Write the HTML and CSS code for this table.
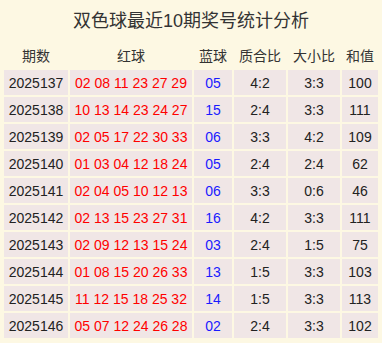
FILE: index.html
```html
<!DOCTYPE html>
<html lang="zh">
<head>
<meta charset="utf-8">
<link rel="stylesheet" href="styles.css">
</head>
<body>
<div class="wrap">
  <h1 class="title">双色球最近10期奖号统计分析</h1>
  <table class="grid">
    <colgroup>
      <col class="c1"><col class="c2"><col class="c3"><col class="c4"><col class="c5"><col class="c6">
    </colgroup>
    <thead>
      <tr><th>期数</th><th>红球</th><th>蓝球</th><th>质合比</th><th>大小比</th><th>和值</th></tr>
    </thead>
    <tbody>
      <tr><td>2025137</td><td class="red">02 08 11 23 27 29</td><td class="blue">05</td><td>4:2</td><td>3:3</td><td>100</td></tr>
      <tr><td>2025138</td><td class="red">10 13 14 23 24 27</td><td class="blue">15</td><td>2:4</td><td>3:3</td><td>111</td></tr>
      <tr><td>2025139</td><td class="red">02 05 17 22 30 33</td><td class="blue">06</td><td>3:3</td><td>4:2</td><td>109</td></tr>
      <tr><td>2025140</td><td class="red">01 03 04 12 18 24</td><td class="blue">05</td><td>2:4</td><td>2:4</td><td>62</td></tr>
      <tr><td>2025141</td><td class="red">02 04 05 10 12 13</td><td class="blue">06</td><td>3:3</td><td>0:6</td><td>46</td></tr>
      <tr><td>2025142</td><td class="red">02 13 15 23 27 31</td><td class="blue">16</td><td>4:2</td><td>3:3</td><td>111</td></tr>
      <tr><td>2025143</td><td class="red">02 09 12 13 15 24</td><td class="blue">03</td><td>2:4</td><td>1:5</td><td>75</td></tr>
      <tr><td>2025144</td><td class="red">01 08 15 20 26 33</td><td class="blue">13</td><td>1:5</td><td>3:3</td><td>103</td></tr>
      <tr><td>2025145</td><td class="red">11 12 15 18 25 32</td><td class="blue">14</td><td>1:5</td><td>3:3</td><td>113</td></tr>
      <tr><td>2025146</td><td class="red">05 07 12 24 26 28</td><td class="blue">02</td><td>2:4</td><td>3:3</td><td>102</td></tr>
    </tbody>
  </table>
</div>
</body>
</html>
```
FILE: styles.css
```css
html, body {
  margin: 0;
  padding: 0;
  background: #fdf8e3;
}
body {
  font-family: "Liberation Sans", Arial, "Noto Sans CJK SC", sans-serif;
  color: #222;
}
.wrap {
  padding: 0 2px;
  width: 378px;
}
.title {
  margin: 0;
  height: 40px;
  line-height: 42px;
  font-size: 18px;
  font-weight: normal;
  text-align: center;
  color: #333;
}
.grid {
  width: 378px;
  table-layout: fixed;
  border-collapse: separate;
  border-spacing: 2px;
  font-size: 14px;
}
.c1 { width: 64px; }
.c2 { width: 122px; }
.c3 { width: 38px; }
.c4 { width: 52px; }
.c5 { width: 52px; }
.c6 { width: 36px; }
.grid th {
  font-weight: normal;
  height: 26px;
  padding: 0;
  text-align: center;
  color: #333;
}
.grid td {
  background: #f0e6e6;
  height: 25px;
  padding: 0;
  text-align: center;
  white-space: nowrap;
}
.grid td.red { color: #ff0000; }
.grid td.blue { color: #1a1aff; }
```
